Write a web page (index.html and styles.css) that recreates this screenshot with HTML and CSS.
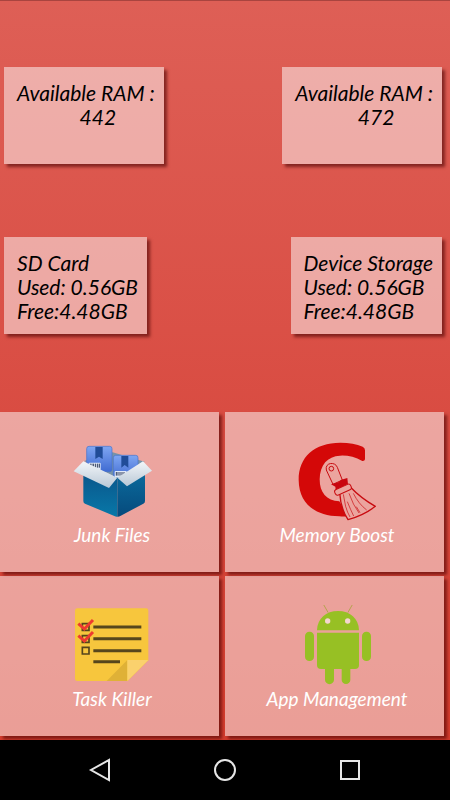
FILE: index.html
```html
<!DOCTYPE html>
<html lang="en">
  <head>
    <meta charset="UTF-8" />
    <meta name="viewport" content="width=device-width, initial-scale=1.0" />
    <link rel="stylesheet" href="styles.css">
    <title>Cleaner</title>
  </head>
  <body>

    <main class="screen">
      <!-- memory and storage info -->
      <section class="stats">
        <div class="stats-row">
          <div class="card">
            <p>Available RAM :</p>
            <p class="value">442</p>
          </div>
          <div class="card">
            <p>Available RAM :</p>
            <p class="value">472</p>
          </div>
        </div>
        <div class="stats-row">
          <div class="card">
            <p>SD Card</p>
            <p>Used: 0.56GB</p>
            <p>Free:4.48GB</p>
          </div>
          <div class="card">
            <p>Device Storage</p>
            <p>Used: 0.56GB</p>
            <p>Free:4.48GB</p>
          </div>
        </div>
      </section>

      <!-- tools -->
      <section class="tiles">
        <button class="tile" type="button">
          <svg class="tile-icon" viewBox="-9 33 330 252" aria-hidden="true">
            <defs>
              <linearGradient id="boxSide" x1="0" y1="0" x2="0" y2="1">
                <stop offset="0" stop-color="#0a5288" />
                <stop offset="1" stop-color="#0878a8" />
              </linearGradient>
              <linearGradient id="boxFront" x1="0" y1="0" x2="0" y2="1">
                <stop offset="0" stop-color="#0b6ea0" />
                <stop offset="1" stop-color="#064a7c" />
              </linearGradient>
              <linearGradient id="pack" x1="0" y1="0" x2="0" y2="1">
                <stop offset="0" stop-color="#7fa6f2" />
                <stop offset="1" stop-color="#3f6bd2" />
              </linearGradient>
              <linearGradient id="flap" x1="0" y1="0" x2="0" y2="1">
                <stop offset="0" stop-color="#f3f6f9" />
                <stop offset="1" stop-color="#b9c8d6" />
              </linearGradient>
            </defs>
            <path d="M72 96L158 70L254 98L172 148Z" fill="#7793a8" />
            <rect x="80" y="52" width="76" height="76" rx="7" fill="url(#pack)" stroke="#4671ca" stroke-width="2" />
            <path d="M106 54H128V90L117 83L106 90Z" fill="#204c98" />
            <rect x="86" y="101" width="36" height="22" rx="3" fill="#e2eaf8" />
            <path d="M91 104V116M96 104V116M101 104V116M107 104V116M113 104V116M118 104V116" stroke="#34405c" stroke-width="3" />
            <rect x="160" y="79" width="74" height="70" rx="7" fill="url(#pack)" stroke="#4671ca" stroke-width="2" />
            <path d="M184 81H205V116L194 108L184 116Z" fill="#204c98" />
            <rect x="164" y="126" width="36" height="20" rx="3" fill="#e2eaf8" />
            <path d="M169 129V140M174 129V140M180 129V140M186 129V140M192 129V140" stroke="#34405c" stroke-width="3" />
            <path d="M70 116L172 146V263Q168 264 163 261L75 224Q70 222 70 216Z" fill="url(#boxSide)" />
            <path d="M172 146L255 116V216Q255 222 250 224L181 261Q176 264 172 263Z" fill="url(#boxFront)" />
            <path d="M70 97L41 127L147 177L172 146Z" fill="url(#flap)" />
            <path d="M249 97L276 125L201 172L172 146Z" fill="url(#flap)" />
          </svg>
          <span>Junk Files</span>
        </button>

        <button class="tile" type="button">
          <svg class="tile-icon" viewBox="6 33 330 252" aria-hidden="true">
            <path d="M255 64V91Q254 97 247 96Q214 78 180 80C142 82 120 107 119 151C119 190 139 216 178 217L205 262Q192 263 178 262C101 260 57 221 56 153C56 83 103 42 181 41Q221 41 248 53Q255 57 255 64Z" fill="#d40808" />
            <path d="M179 191L214 177Q242 207 286 232Q252 259 204 272Q182 239 179 191Z" fill="#eba49e" stroke="#c80b10" stroke-width="4" stroke-linejoin="round" />
            <path d="M190 196Q194 236 210 264M202 218Q212 243 221 261M207 193Q219 228 237 252M220 193Q236 225 260 243M229 233L240 251" fill="none" stroke="#c80b10" stroke-width="2" />
            <path d="M139 123C134 100 166 97 172 115L187 153L159 166Z" fill="#eba49e" stroke="#c80b10" stroke-width="3" />
            <circle cx="154" cy="119" r="7" fill="#eba49e" stroke="#c80b10" stroke-width="3" />
            <path d="M153 166L175 160L184 152L202 147L204 166L167 183L166 173Z" fill="#c90710" />
            <rect x="163" y="173" width="52" height="18" rx="7" fill="#eba49e" stroke="#c80b10" stroke-width="3" transform="rotate(-24 189 182)" />
          </svg>
          <span>Memory Boost</span>
        </button>

        <button class="tile" type="button">
          <svg class="tile-icon" viewBox="-9 15 330 252" aria-hidden="true">
            <path d="M52 28H258Q265 28 265 35V184L203 246H52Q45 246 45 239V35Q45 28 52 28Z" fill="#f7c63d" />
            <path d="M140 246L202 183V246Z" fill="#dfb137" />
            <path d="M202 183H265L202 246Z" fill="#fad16d" />
            <path d="M100 84H244M100 119H244M100 155H244M100 188H180" stroke="#56461c" stroke-width="9" />
            <path d="M67 74H87V94H67ZM67 110H87V130H67ZM67 145H87V165H67Z" fill="none" stroke="#56461c" stroke-width="5" />
            <path d="M55 74L73 90L99 63M55 110L73 126L99 99" fill="none" stroke="#ee3a30" stroke-width="9" />
          </svg>
          <span>Task Killer</span>
        </button>

        <button class="tile" type="button">
          <svg class="tile-icon" viewBox="66 15 330 252" aria-hidden="true">
            <g fill="#97c024">
              <path d="M171 94C172 58 198 36 234 36S296 58 297 94Z" />
              <path d="M171 101H297V198Q297 210 285 210H183Q171 210 171 198Z" />
              <rect x="135" y="98" width="27" height="88" rx="13" />
              <rect x="306" y="98" width="27" height="88" rx="13" />
              <path d="M195 205H222V242A13 13 0 0 1 195 242Z" />
              <path d="M245 205H271V242A13 13 0 0 1 245 242Z" />
            </g>
            <path d="M192 19L204 40M276 19L264 40" stroke="#b5a34d" stroke-width="3" stroke-linecap="round" />
            <circle cx="203" cy="66" r="8" fill="#f5d5d0" />
            <circle cx="263" cy="66" r="8" fill="#f5d5d0" />
          </svg>
          <span>App Management</span>
        </button>
      </section>
    </main>

    <!-- system navigation -->
    <nav class="navbar">
      <button class="nav-btn" type="button" aria-label="Back">
        <svg viewBox="0 0 24 24"><path d="M21 2V22L3 12Z" /></svg>
      </button>
      <button class="nav-btn" type="button" aria-label="Home">
        <svg viewBox="0 0 24 24"><circle cx="12" cy="12" r="10" /></svg>
      </button>
      <button class="nav-btn" type="button" aria-label="Recent apps">
        <svg viewBox="0 0 24 24"><rect x="3" y="3" width="18" height="18" /></svg>
      </button>
    </nav>

  </body>
</html>
```

FILE: styles.css
```css
* {
  box-sizing: border-box;
}

body {
  margin: 0;
  min-height: 100vh;
  display: flex;
  flex-direction: column;
  background-color: black;
  font-family: Lato, "Open Sans", sans-serif;
  font-style: italic;
}

.screen {
  flex: 1;
  display: flex;
  flex-direction: column;
  overflow: hidden;
  border-top: 1px solid #a9443f;
  background: linear-gradient(#de5f56, #d94c42 56%, #d53c2d);
}

.stats {
  display: flex;
  flex-direction: column;
  gap: 73px;
  padding: 66px 8px 78px 4px;
}

.stats-row {
  display: flex;
  justify-content: space-between;
}

.card {
  min-height: 97px;
  padding: 14px 9px 11px 13px;
  background-color: rgba(255, 255, 255, 0.5);
  box-shadow: 3px 3px 3px rgba(70, 0, 0, 0.6);
  color: black;
  font-size: 21px;
  line-height: 24px;
}

.card p {
  margin: 0;
}

.card .value {
  padding-left: 24px;
  text-align: center;
}

.tiles {
  flex: 1;
  display: grid;
  grid-template-columns: 1fr 1fr;
  grid-auto-rows: 1fr;
  gap: 4px 6px;
  padding: 0 6px 4px 0;
}

.tile {
  display: flex;
  flex-direction: column;
  align-items: center;
  justify-content: center;
  padding: 2px 0 0 5px;
  border: none;
  background-color: rgba(255, 255, 255, 0.5);
  box-shadow: 3px 3px 3px rgba(70, 0, 0, 0.6);
  color: white;
  font: inherit;
  font-size: 19px;
  line-height: 22px;
  cursor: pointer;
}

.tile-icon {
  width: 110px;
  height: 84px;
}

.navbar {
  display: flex;
  justify-content: space-around;
  align-items: center;
  height: 60px;
  padding: 0 37px;
  background-color: black;
}

.nav-btn {
  display: flex;
  padding: 0;
  border: none;
  background: none;
  cursor: pointer;
}

.nav-btn svg {
  width: 24px;
  height: 24px;
  fill: none;
  stroke: #e6e6e6;
  stroke-width: 2;
}
```
